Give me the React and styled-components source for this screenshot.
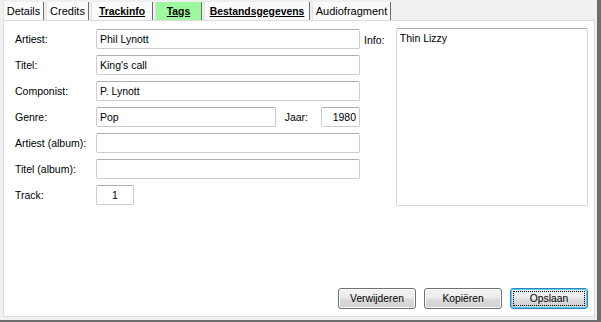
import styled, { createGlobalStyle } from "styled-components";

const GlobalStyle = createGlobalStyle`
  html, body {
    margin: 0;
    padding: 0;
    background: #f0f0f0;
  }
  body {
    font-family: "Liberation Sans", Arial, sans-serif;
    font-size: 10.5px;
    color: #000;
  }
`;

const Window = styled.div`
  width: 597px;
  height: 320px;
  background: #f0f0f0;
  border-right: 4px solid #6d6d6d;
  border-bottom: 2px solid #6d6d6d;
  display: flex;
  flex-direction: column;
`;

const TabStrip = styled.div`
  display: flex;
  height: 18px;
  padding: 2px 0 0 3px;
`;

const Tab = styled.div`
  box-sizing: border-box;
  width: ${(p) => p.$width}px;
  display: flex;
  align-items: center;
  justify-content: center;
  margin-right: 2px;
  font-size: ${(p) => (p.$bold ? "10.4px" : "11px")};
  background: ${(p) => (p.$active ? "#9ef89e" : "#fbfbfb")};
  border-left: 1px solid #e3e3e3;
  border-right: 1px solid #6e6e6e;
  font-weight: ${(p) => (p.$bold ? "bold" : "normal")};
  text-decoration: ${(p) => (p.$bold ? "underline" : "none")};
  white-space: nowrap;
`;

const Panel = styled.div`
  flex: 1;
  margin: 0 2px 3px 3px;
  background: #fff;
  border: 1px solid #dcdcdc;
  display: flex;
  flex-direction: column;
  padding: 7px 6px 7px 10px;
`;

const Body = styled.div`
  display: flex;
  align-items: flex-start;
`;

const Form = styled.div`
  display: grid;
  grid-template-columns: 82px 264px;
  grid-auto-rows: 20px;
  row-gap: 6px;
  margin-top: 1px;
`;

const Label = styled.label`
  display: flex;
  align-items: center;
  padding-left: 1px;
  white-space: nowrap;
`;

const Field = styled.input`
  box-sizing: border-box;
  width: ${(p) => p.$width || "100%"};
  height: 20px;
  margin: 0;
  padding: 0 3px;
  font: inherit;
  color: #000;
  background: #fff;
  border: 1px solid #c9ccd1;
  border-top-color: #abadb3;
  border-radius: 2px;
  text-align: ${(p) => p.$align || "left"};
  outline: none;
`;

const Split = styled.div`
  display: flex;
  align-items: center;
`;

const Inline = styled.span`
  margin: 0 13px 0 auto;
`;

const InfoLabel = styled.span`
  margin: 6px 0 0 4px;
  width: 32px;
`;

const InfoBox = styled.div`
  box-sizing: border-box;
  width: 193px;
  height: 178px;
  padding: 3px 3px;
  border: 1px solid #d4d6da;
  border-top-color: #abadb3;
  border-radius: 2px;
`;

const Footer = styled.div`
  margin-top: auto;
  display: flex;
  justify-content: flex-end;
  gap: 8px;
`;

const Button = styled.button`
  box-sizing: border-box;
  width: 78px;
  height: 21px;
  padding: 0;
  font: inherit;
  font-size: 10.3px;
  color: #000;
  border: 1px solid ${(p) => (p.$focus ? "#3c7fb1" : "#707070")};
  border-radius: 3px;
  background: linear-gradient(#f2f2f2 0%, #ebebeb 48%, #dddddd 52%, #cfcfcf 100%);
  box-shadow: inset 0 0 0 1px ${(p) => (p.$focus ? "#48d0ff" : "#fcfcfc")};
  position: relative;

  &::after {
    content: "";
    display: ${(p) => (p.$focus ? "block" : "none")};
    position: absolute;
    inset: 2px;
    border: 1px dotted #000;
  }
`;

const tabs = [
  { label: "Details", width: 41 },
  { label: "Credits", width: 43 },
  { label: "Trackinfo", width: 62, bold: true },
  { label: "Tags", width: 47, bold: true, active: true },
  { label: "Bestandsgegevens", width: 106, bold: true },
  { label: "Audiofragment", width: 79 },
];

export default function App() {
  return (
    <>
      <GlobalStyle />
      <Window>
        <TabStrip>
          {tabs.map((t) => (
            <Tab key={t.label} $width={t.width} $bold={t.bold} $active={t.active}>
              {t.label}
            </Tab>
          ))}
        </TabStrip>
        <Panel>
          <Body>
            <Form>
              <Label>Artiest:</Label>
              <Field defaultValue="Phil Lynott" />
              <Label>Titel:</Label>
              <Field defaultValue="King's call" />
              <Label>Componist:</Label>
              <Field defaultValue="P. Lynott" />
              <Label>Genre:</Label>
              <Split>
                <Field $width="180px" defaultValue="Pop" />
                <Inline>Jaar:</Inline>
                <Field $width="39px" $align="right" defaultValue="1980" />
              </Split>
              <Label>Artiest (album):</Label>
              <Field defaultValue="" />
              <Label>Titel (album):</Label>
              <Field defaultValue="" />
              <Label>Track:</Label>
              <Split>
                <Field $width="38px" $align="center" defaultValue="1" />
              </Split>
            </Form>
            <InfoLabel>Info:</InfoLabel>
            <InfoBox>Thin Lizzy</InfoBox>
          </Body>
          <Footer>
            <Button>Verwijderen</Button>
            <Button>Kopiëren</Button>
            <Button $focus>Opslaan</Button>
          </Footer>
        </Panel>
      </Window>
    </>
  );
}
